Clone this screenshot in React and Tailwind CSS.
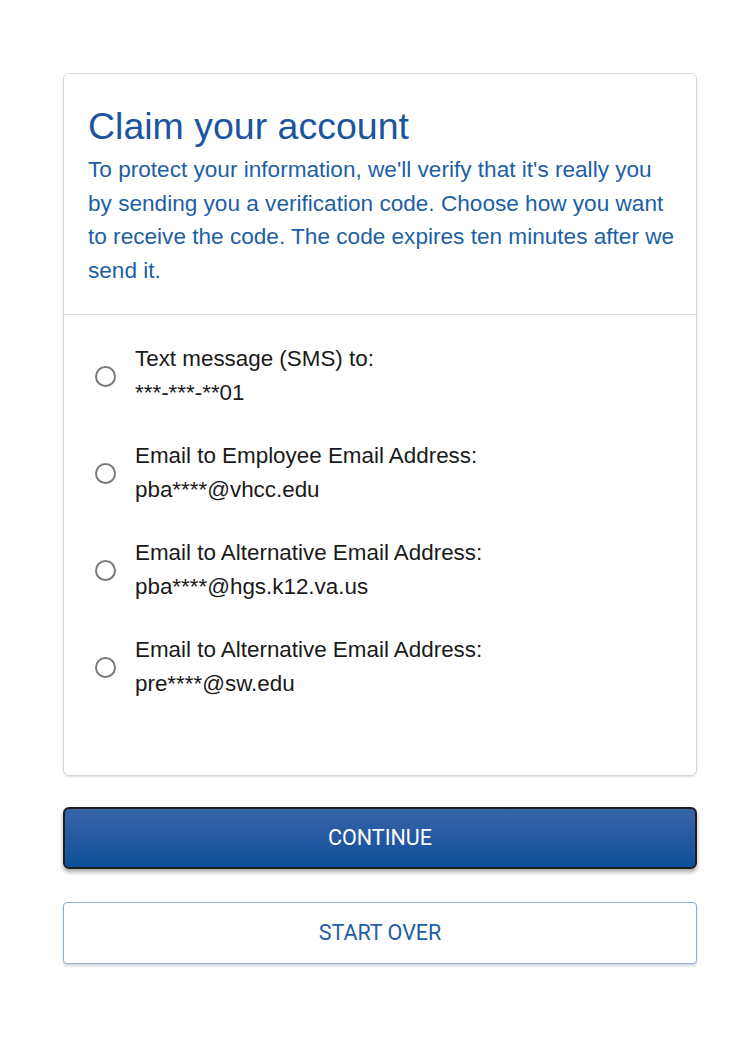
export default function App() {
  const options = [
    ["Text message (SMS) to:", "***-***-**01"],
    ["Email to Employee Email Address:", "pba****@vhcc.edu"],
    ["Email to Alternative Email Address:", "pba****@hgs.k12.va.us"],
    ["Email to Alternative Email Address:", "pre****@sw.edu"],
  ];
  return (
    <div className="min-h-[1050px] bg-white pt-[73px] pl-[63px]" style={{ fontFamily: '"Liberation Sans", Arial, sans-serif' }}>
      <div className="w-[634px]">
        <div className="rounded-[6px] border border-[#d6d6d6] shadow-[0_1px_2px_rgba(0,0,0,0.12)]">
          <div className="border-b border-[#dedede] pl-[24px] pr-[18px] pt-[30px] pb-[27px]">
            <h1 className="text-[37.5px] leading-[44px] text-[#1b55a0]">Claim your account</h1>
            <p className="mt-[5px] text-[22.6px] leading-[33.5px] text-[#1d5fa6]">
              To protect your information, we'll verify that it's really you by sending you a verification code. Choose how you want to receive the code. The code expires ten minutes after we send it.
            </p>
          </div>
          <div className="flex flex-col gap-[29px] px-[31px] pt-[27px] pb-[74px]">
            {options.map(([a, b], i) => (
              <label key={i} className="flex items-center gap-[19px]">
                <span className="h-[21px] w-[21px] shrink-0 rounded-full border-2 border-[#7a7a7a] bg-white" />
                <span className="text-[22.4px] leading-[34px] text-[#1a1a1a]">
                  <span className="block">{a}</span>
                  <span className="block">{b}</span>
                </span>
              </label>
            ))}
          </div>
        </div>
        <button className="mt-[31px] flex h-[62px] w-full items-center justify-center rounded-[6px] border-2 border-[#1e1e1e] bg-gradient-to-b from-[#3764a8] to-[#084f9a] text-[21.5px] text-white shadow-[0_3px_4px_rgba(0,0,0,0.35)]" style={{ fontFamily: 'Roboto, sans-serif' }}>
          CONTINUE
        </button>
        <button className="mt-[33px] flex h-[62px] w-full items-center justify-center rounded-[4px] border border-[#8fb1da] bg-white text-[21.5px] text-[#1f5ea6] shadow-[0_2px_3px_rgba(0,0,0,0.18)]" style={{ fontFamily: 'Roboto, sans-serif' }}>
          START OVER
        </button>
      </div>
    </div>
  );
}
